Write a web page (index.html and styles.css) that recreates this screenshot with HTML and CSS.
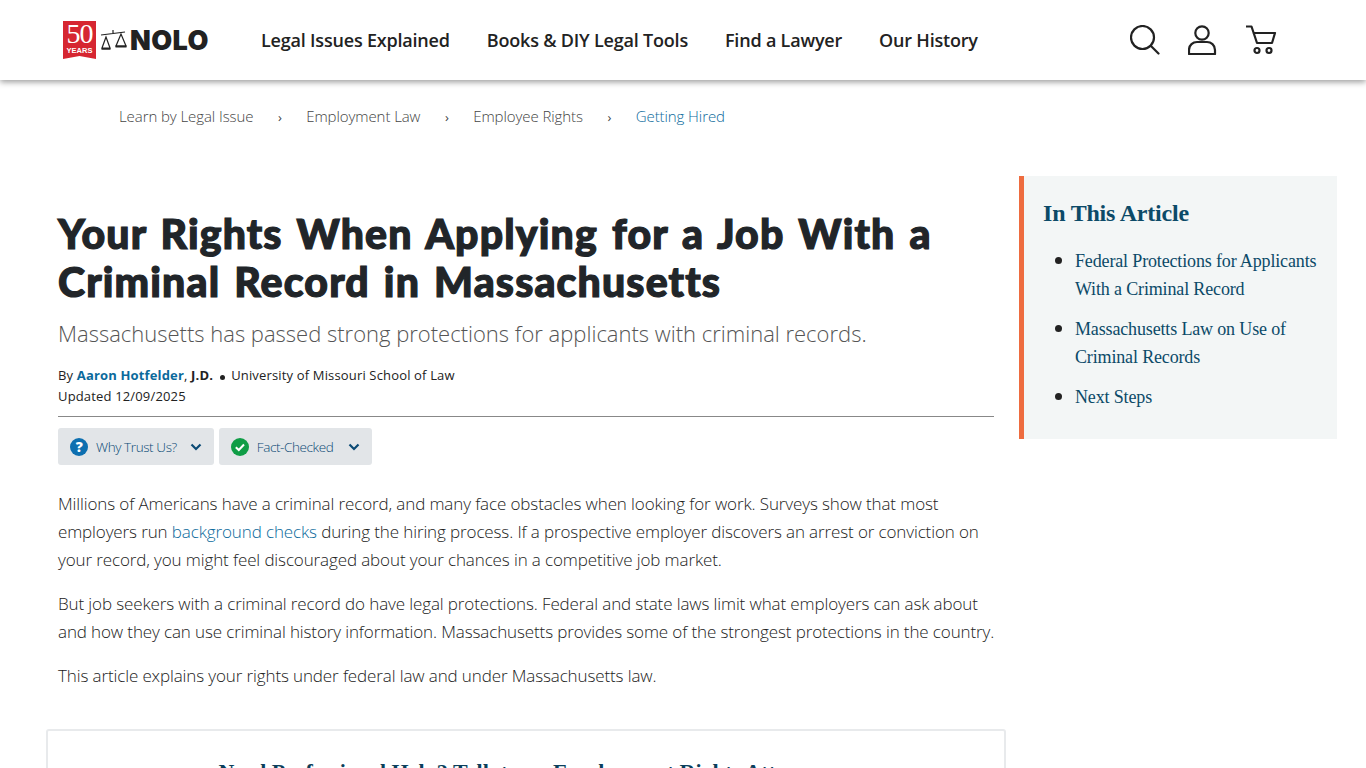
FILE: index.html
```html
<!DOCTYPE html>
<html lang="en">
<head>
<meta charset="utf-8">
<title>Your Rights When Applying for a Job With a Criminal Record in Massachusetts</title>
<link rel="stylesheet" href="styles.css">
</head>
<body>
<header class="topbar">
  <a class="logo" href="#">
    <span class="ribbon"><span class="r50">50</span><span class="ryears">YEARS</span></span>
    <svg class="scales" width="28" height="20" viewBox="0 0 28 20" fill="none" stroke="#222" stroke-width="1.200"><path d="M1 5 25 2M13 0v4"/><path d="M6 7 2 18h8zM21 4l-5 12h10z"/><path d="M1.500 18.800h9M15.500 16.500h11" stroke-width="1.800"/></svg>
    <span class="nolo">NOLO</span>
  </a>
  <nav class="mainnav">
    <a href="#">Legal Issues Explained</a>
    <a href="#">Books &amp; DIY Legal Tools</a>
    <a href="#">Find a Lawyer</a>
    <a href="#">Our History</a>
  </nav>
  <div class="tools">
    <svg width="30" height="30" viewBox="0 0 30 30" fill="none" stroke="#222" stroke-width="2.200"><circle cx="12.500" cy="12.500" r="11.500"/><path d="M21 21l7.500 7.500" stroke-linecap="round"/></svg>
    <svg width="30" height="30" viewBox="0 0 30 30" fill="none" stroke="#222" stroke-width="2.200"><circle cx="14" cy="8" r="6.700"/><path d="M1 29v-4c0-5 4-8 8-8h10c4 0 8 3 8 8v4z" stroke-linejoin="round"/></svg>
    <svg width="31" height="30" viewBox="0 0 31 30" fill="none" stroke="#222" stroke-width="2.200"><path d="M.5 1.500h5L11 18h15l3-10H7.500" stroke-linejoin="round" stroke-linecap="round"/><circle cx="11" cy="25.500" r="2.500"/><circle cx="23" cy="25.500" r="2.500"/></svg>
  </div>
</header>

<ol class="crumbs">
  <li><a href="#">Learn by Legal Issue</a></li>
  <li><a href="#">Employment Law</a></li>
  <li><a href="#">Employee Rights</a></li>
  <li class="current"><a href="#">Getting Hired</a></li>
</ol>

<div class="layout">
  <main class="article">
    <h1>Your Rights When Applying for a Job With a Criminal Record in Massachusetts</h1>
    <p class="subtitle">Massachusetts has passed strong protections for applicants with criminal records.</p>
    <p class="byline">By <a href="#">Aaron Hotfelder</a>, <b>J.D.</b> <span class="dot"></span> University of Missouri School of Law</p>
    <p class="updated">Updated 12/09/2025</p>
    <div class="badges">
      <button class="badge">
        <svg width="18" height="18" viewBox="0 0 18 18"><circle cx="9" cy="9" r="9" fill="#0d6fb0"/><text x="9" y="14" text-anchor="middle" class="qmark">?</text></svg>
        <span>Why Trust Us?</span>
        <svg class="chev" width="12" height="8" viewBox="0 0 12 8" fill="none" stroke="#0b4a75" stroke-width="2.200"><path d="M1.500 1.500 6 6l4.500-4.500"/></svg>
      </button>
      <button class="badge">
        <svg width="18" height="18" viewBox="0 0 18 18"><circle cx="9" cy="9" r="9" fill="#0f9d46"/><path d="M4.800 9.200 7.800 12l5.200-5.500" fill="none" stroke="#fff" stroke-width="2"/></svg>
        <span>Fact-Checked</span>
        <svg class="chev" width="12" height="8" viewBox="0 0 12 8" fill="none" stroke="#0b4a75" stroke-width="2.200"><path d="M1.500 1.500 6 6l4.500-4.500"/></svg>
      </button>
    </div>
    <p class="body">Millions of Americans have a criminal record, and many face obstacles when looking for work. Surveys show that most employers run <a href="#">background checks</a> during the hiring process. If a prospective employer discovers an arrest or conviction on your record, you might feel discouraged about your chances in a competitive job market.</p>
    <p class="body">But job seekers with a criminal record do have legal protections. Federal and state laws limit what employers can ask about and how they can use criminal history information. Massachusetts provides some of the strongest protections in the country.</p>
    <p class="body">This article explains your rights under federal law and under Massachusetts law.</p>
    <section class="cta">
      <h2>Need Professional Help? Talk to an Employment Rights Attorney.</h2>
    </section>
  </main>
  <aside class="toc">
    <h2>In This Article</h2>
    <ul>
      <li><a href="#">Federal Protections for Applicants With a Criminal Record</a></li>
      <li><a href="#">Massachusetts Law on Use of Criminal Records</a></li>
      <li><a href="#">Next Steps</a></li>
    </ul>
  </aside>
</div>
</body>
</html>
```
FILE: styles.css
```css
* { box-sizing: border-box; }
html, body { margin: 0; height: 768px; overflow: hidden; }
body { background: #fff; color: #212529; font-family: "Open Sans", "Noto Sans", sans-serif; }
a { color: inherit; text-decoration: none; }

.topbar { height: 80px; display: flex; align-items: center; padding: 0 89px 0 63px; background: #fff; box-shadow: 0 2px 6px rgba(0,0,0,.4); position: relative; }
.logo { display: flex; align-items: center; width: 198px; flex: none; }
.ribbon { width: 33px; height: 38px; background: #d62631; color: #fff; display: flex; flex-direction: column; align-items: center; clip-path: polygon(0 0,100% 0,100% 100%,50% 92%,0 100%); }
.r50 { font: 400 28px/24px "Liberation Serif", serif; letter-spacing: -1px; margin-top: 1px; }
.ryears { font: 700 7.500px/10px "Liberation Sans", sans-serif; }
.scales { margin-left: 4px; }
.nolo { font: 900 27px/1 Inter, "Liberation Sans", sans-serif; color: #222; margin-left: 2px; letter-spacing: .4px; }
.mainnav { display: flex; gap: 37px; flex: 1; font-size: 18px; font-weight: 600; color: #222; letter-spacing: -.2px; }
.tools { display: flex; align-items: center; gap: 28px; }

.crumbs { list-style: none; margin: 0; padding: 26px 0 0 119px; display: flex; font-size: 15px; font-weight: 300; color: #444; height: 96px; line-height: 20px; letter-spacing: -.08px; }
.crumbs li + li::before { content: "›"; margin: 0 24.500px; font-weight: 400; font-size: 13px; }
.crumbs .current { color: #0b6a9c; }
.crumbs .current::before { color: #444; }

.layout { display: flex; align-items: flex-start; padding-left: 58px; }
.article { width: 936px; flex: none; padding-top: 34px; }
h1 { margin: 0; font-family: Lato, "Open Sans", sans-serif; font-size: 41px; line-height: 48px; font-weight: 900; color: #212529; letter-spacing: 1.150px; word-spacing: 3.100px; -webkit-text-stroke: 1.200px #212529; }
.subtitle { margin: 11px 0 0; font-size: 22px; font-weight: 300; line-height: 32px; color: #555; }
.byline, .updated { margin: 0; font-size: 13px; line-height: 21px; color: #222; letter-spacing: .16px; }
.byline { margin-top: 16px; }
.byline a { color: #0b6a9c; font-weight: 700; }
.dot { display: inline-block; width: 5px; height: 5px; border-radius: 50%; background: #222; margin: 0 3px; vertical-align: 0; }
.updated { padding-bottom: 9px; border-bottom: 1px solid #888; height: 31px; }
.badges { display: flex; gap: 5px; margin-top: 11px; }
.badge { height: 37px; border: 0; border-radius: 3px; background: #e2e5e8; display: flex; align-items: center; padding: 0 12px; gap: 8px; font: 300 13.500px "Open Sans", sans-serif; color: #0b4a75; letter-spacing: -.4px; }
.chev { margin-left: 5px; }
.badge + .badge .chev { margin-left: 7px; }
.qmark { font: 800 14px "Open Sans", sans-serif; fill: #fff; }
.body { margin: 0 -6px 16px 0; font-size: 17px; line-height: 28px; font-weight: 300; color: #222; letter-spacing: -.12px; }
.body a { color: #0b6a9c; }
.badges + .body { margin-top: 25px; }
.cta { margin: 39px 0 0 -12px; width: 960px; height: 120px; border: 2px solid #e8eaec; border-radius: 3px; padding-top: 28px; }
.cta h2 { margin: 0; font: 700 22px/26px "Liberation Serif", serif; color: #0b3f5c; text-align: center; }

.toc { margin: 0 0 0 25px; width: 318px; height: 263px; background: #f3f6f6; border-left: 5px solid #ee6c3f; padding: 22px 10px 0 19px; font-family: "Liberation Serif", serif; }
.toc h2 { margin: 0; font-size: 24px; line-height: 30px; font-weight: 700; color: #0b4a68; letter-spacing: -.2px; }
.toc ul { margin: 18px 0 0; padding: 0 0 0 32px; font-size: 18px; line-height: 28px; letter-spacing: -.15px; }
.toc li { margin-bottom: 11px; color: #222; }
.toc li::marker { font-size: 22px; }
.toc a { color: #0b4a68; }
```
